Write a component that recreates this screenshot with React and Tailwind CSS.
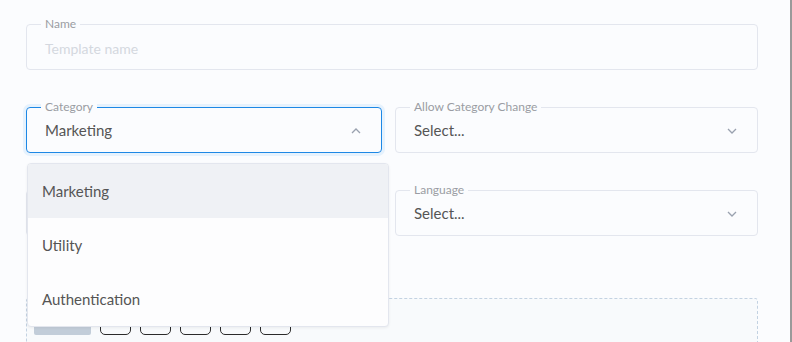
import { useState } from 'react';

const font = { fontFamily: 'Lato, "Noto Sans", sans-serif' };

const Chevron = ({ up }) => (
  <svg width="10" height="6" viewBox="0 0 10 6" className="text-gray-400">
    <path
      d={up ? 'M1 5 L5 1 L9 5' : 'M1 1 L5 5 L9 1'}
      fill="none"
      stroke="currentColor"
      strokeWidth="1.3"
    />
  </svg>
);

const Field = ({ label, children, focused, className = '' }) => (
  <div
    className={`relative h-[46px] rounded-[4px] border ${
      focused
        ? 'border-[#1e88e5] ring-[3px] ring-[#e6f2fd]'
        : 'border-[#e3e6ee]'
    } ${className}`}
  >
    {label && (
      <span className="absolute left-[14px] top-[-9px] bg-[#fbfcfe] px-1 text-[12px] leading-4 text-[#9a9ca3]">
        {label}
      </span>
    )}
    {children}
  </div>
);

const SelectBox = ({ label, value, focused, open }) => (
  <Field label={label} focused={focused}>
    <div className="flex h-full items-center justify-between pl-[18px] pr-[20px] pt-[1px]">
      <span className="text-[15px] text-[#555]">{value}</span>
      <Chevron up={open} />
    </div>
  </Field>
);

export default function App() {
  const [options] = useState(['Marketing', 'Utility', 'Authentication']);

  return (
    <div
      className="relative h-[342px] w-[792px] overflow-hidden border-r-2 border-[#9a9a9a] bg-[#fbfcfe]"
      style={font}
    >
      <div className="flex w-[758px] flex-col pl-[26px] pt-[24px]">
        {/* Name */}
        <Field label="Name">
          <div className="flex h-full items-center pl-[18px] pt-[2px]">
            <span className="text-[14px] text-[#d4d8df]">Template name</span>
          </div>
        </Field>

        <div className="mt-[37px] grid grid-cols-[356px_1fr] gap-x-[13px] gap-y-[37px]">
          <div className="relative">
            <SelectBox label="Category" value="Marketing" focused open />
            {/* dropdown */}
            <div className="absolute left-[1px] top-[56px] z-10 w-[362px] overflow-hidden rounded-[4px] border border-[#e3e6ee] bg-[#fdfdfe] shadow-[0_1px_3px_rgba(0,0,0,0.06)]">
              {options.map((o, i) => (
                <div
                  key={o}
                  className={`flex h-[54px] items-center pl-[14px] text-[15px] text-[#555] ${
                    i === 0 ? 'bg-[#eff1f5]' : ''
                  }`}
                >
                  {o}
                </div>
              ))}
            </div>
          </div>
          <SelectBox label="Allow Category Change" value="Select..." />
          <Field />
          <SelectBox label="Language" value="Select..." />
        </div>

        {/* editor area */}
        <div className="mt-[62px] h-[60px] rounded-t-[3px] border border-dashed border-[#c3d2e2] bg-[#f8fafc]">
          <div className="flex items-center gap-[9px] pl-[7px] pt-[16px]">
            <div className="h-[20px] w-[57px] rounded-[2px] bg-[#c2cdd9]" />
            {[0, 1, 2, 3, 4].map((i) => (
              <div
                key={i}
                className="h-[20px] w-[31px] rounded-[5px] border border-[#2b2b2b]"
              />
            ))}
          </div>
        </div>
      </div>
    </div>
  );
}
